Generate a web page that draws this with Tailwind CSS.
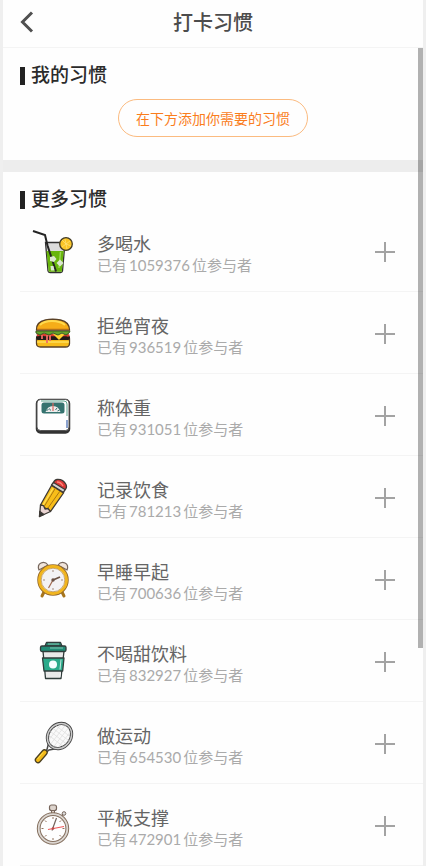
<!DOCTYPE html>
<html lang="zh-CN">
<head>
    <meta charset="UTF-8">
    <meta name="viewport" content="width=device-width, initial-scale=1.0">
    <title>打卡习惯</title>
    <script src="https://cdn.jsdelivr.net/npm/@tailwindcss/browser@4"></script>
</head>
<body class="bg-[#efefef] font-['Liberation_Sans','Noto_Sans_CJK_SC',sans-serif]">
    <div class="relative mx-[3px] h-screen overflow-hidden bg-[#fefefe]">
        <!-- Header -->
        <header class="grid h-12 grid-cols-[48px_1fr_48px] items-center border-b border-[#f4f4f4] pb-1">
            <button type="button" aria-label="返回" class="flex h-full items-center pl-4">
                <svg class="h-6 w-5" viewBox="0 0 20 24" fill="none" stroke="#505050" stroke-width="3"><path d="M13 2.500L3.500 12l9.500 9.500"/></svg>
            </button>
            <h1 class="pt-0.5 text-center text-xl leading-6 font-medium text-[#4c4c4c]">打卡习惯</h1>
        </header>

        <main>
            <!-- My habits -->
            <section class="h-28 px-[17px] pt-4">
                <h2 class="flex items-center gap-1.5 text-[19px] leading-6 font-medium text-[#2b2b2b]">
                    <span class="h-[18px] w-[5px] bg-[#222222]"></span>我的习惯
                </h2>
                <div class="mt-[11px] flex justify-center">
                    <button type="button" class="h-[38px] rounded-full border border-[#fbbb80] px-[17px] pt-0.5 text-sm text-[#fa7d1c]">在下方添加你需要的习惯</button>
                </div>
            </section>

            <div class="h-3 bg-[#ededed]"></div>

            <!-- More habits -->
            <section class="pt-4 pl-[17px]">
                <h2 class="flex items-center gap-1.5 text-[19px] leading-6 font-medium text-[#2b2b2b]">
                    <span class="h-[18px] w-[5px] bg-[#222222]"></span>更多习惯
                </h2>
                <ul class="-mt-0.5">
                    <li class="flex h-[82px] items-center border-b border-[#f4f4f4] pt-0.5 pr-7 pl-2">
                        <svg class="size-[50px]" viewBox="0 0 50 50" fill="none">
                            <path d="M17.500 15.500h19.500l-2.500 28.500q-.2 1.500-2 1.500H22q-1.800 0-2-1.500z" fill="#dcdcdc" stroke="#303030" stroke-width="1.300"/>
                            <path d="M18.500 24h17.200l-1.900 20.700H20.700z" fill="#68b50d"/>
                            <path d="M32.500 25l-1.500 16" stroke="#9bd751" stroke-width="1.500"/>
                            <circle cx="38" cy="17" r="6.300" fill="#fbc526" stroke="#423b25" stroke-width="1.300"/>
                            <path d="M38 17l-4-4m4 4l-1-5m1 5l4-3m-4 3l5 2m-5-2l1 5m-1-5l-4 3" stroke="#ffe47d" stroke-width=".7"/>
                            <path d="M5 4l12 4 2.500 10.500L28 44.500" stroke="#242424" stroke-width="2"/>
                            <path d="M22 30l4-1 2.500 3-2.500 3-4-1z M32 32.500l3.500 3.500-3.500 3.500-3.500-3.500z M22.500 39h3l1 4.500h-3.500z" fill="#dce8cf"/>
                        </svg>
                        <div class="ml-[19px] flex-1 pt-2">
                            <h3 class="text-[18px] leading-5 text-[#656565]">多喝水</h3>
                            <p class="text-[15px] leading-5 text-[#aaaaaa]">已有<span class="mx-0.5 font-['Lato',sans-serif]">1059376</span>位参与者</p>
                        </div>
                        <button type="button" aria-label="添加多喝水"><svg class="size-5" viewBox="0 0 20 20" stroke="#a3a3a3" stroke-width="2"><path d="M0 10h20M10 0v20"/></svg></button>
                    </li>
                    <li class="flex h-[82px] items-center border-b border-[#f4f4f4] pt-0.5 pr-7 pl-2">
                        <svg class="size-[50px]" viewBox="0 0 50 50" fill="none">
                            <path d="M8.500 30h33v4.500q0 3.500-4 3.500h-25q-4 0-4-3.500z" fill="#f7bb1a" stroke="#594026" stroke-width="1.300"/>
                            <path d="M9 33h32" stroke="#ffe363" stroke-width="1.300"/>
                            <rect x="8" y="26" width="34" height="5" rx="2.500" fill="#211b18"/>
                            <path d="M9 26.500q4-2 8-.5h21q2 0 3 1" stroke="#dc3c2e" stroke-width="2.500"/>
                            <path d="M14 26v4M19 26v8M22 26v6" stroke="#ef6c64" stroke-width="1.800"/>
                            <path d="M25 25h12l-6 6z" fill="#ffd22e"/>
                            <path d="M8 22h34l-1 2-3 2-4-2-4 2-5-2-4 2-5-2-4 2-4-2z" fill="#65a42b" stroke="#395c21"/>
                            <path d="M8.500 21q-.5-8 9-10 7-1.500 15 0 9 2 9 10z" fill="#f5ad18" stroke="#594026" stroke-width="1.300"/>
                            <path d="M12 16q4-4 12-4 8 0 13 4" stroke="#ffda4e" stroke-width="2"/>
                            <path d="M9 20h32" stroke="#dd8917"/>
                        </svg>
                        <div class="ml-[19px] flex-1 pt-2">
                            <h3 class="text-[18px] leading-5 text-[#656565]">拒绝宵夜</h3>
                            <p class="text-[15px] leading-5 text-[#aaaaaa]">已有<span class="mx-0.5 font-['Lato',sans-serif]">936519</span>位参与者</p>
                        </div>
                        <button type="button" aria-label="添加拒绝宵夜"><svg class="size-5" viewBox="0 0 20 20" stroke="#a3a3a3" stroke-width="2"><path d="M0 10h20M10 0v20"/></svg></button>
                    </li>
                    <li class="flex h-[82px] items-center border-b border-[#f4f4f4] pt-0.5 pr-7 pl-2">
                        <svg class="size-[50px]" viewBox="0 0 50 50" fill="none">
                            <rect x="8.500" y="8.500" width="33" height="33.500" rx="4" fill="#333" stroke="#333" stroke-width="1.500"/>
                            <rect x="9" y="8.500" width="32" height="31" rx="3.500" fill="#fefefe" stroke="#555" stroke-width="1"/>
                            <rect x="13.500" y="11.500" width="23" height="11" rx="2.500" fill="#35736f"/>
                            <path d="M17.500 21q2-6 7.500-6t7.500 6z" fill="#ececec"/>
                            <path d="M18.500 20l2-2M21.500 17.500l1 2M29 17l-1.500 2M31.500 19l-2 1" stroke="#35736f"/>
                            <path d="M25 12v8" stroke="#dc665e" stroke-width="1.200"/>
                            <path d="M13 10h23q3 0 3 3v12" stroke="#5ca58e"/>
                            <path d="M39 29v8" stroke="#4c70b4" stroke-width="1.300"/>
                        </svg>
                        <div class="ml-[19px] flex-1 pt-2">
                            <h3 class="text-[18px] leading-5 text-[#656565]">称体重</h3>
                            <p class="text-[15px] leading-5 text-[#aaaaaa]">已有<span class="mx-0.5 font-['Lato',sans-serif]">931051</span>位参与者</p>
                        </div>
                        <button type="button" aria-label="添加称体重"><svg class="size-5" viewBox="0 0 20 20" stroke="#a3a3a3" stroke-width="2"><path d="M0 10h20M10 0v20"/></svg></button>
                    </li>
                    <li class="flex h-[82px] items-center border-b border-[#f4f4f4] pt-0.5 pr-7 pl-2">
                        <svg class="size-[50px]" viewBox="0 0 50 50" fill="none" stroke="#3e3935" stroke-width="1.300" stroke-linejoin="round">
                            <path d="M25 11q1-4 4-4.500 6-.5 9 5 1.500 3-1.500 6z" fill="#dc3838"/>
                            <path d="M23.500 12l2-2.500 11.500 7-1.500 3z" fill="#d3d3d3"/>
                            <path d="M23.500 12.500L12.500 32l10 6.500L35.500 20z" fill="#f8bd19"/>
                            <path d="M12.500 32l-1 11.500 11-5-2.500-3-3 .5-1.500-3.500z" fill="#ead4d2"/>
                            <path d="M11.800 38.500l-.3 5 4.500-2z" fill="#343434"/>
                            <path d="M27.500 15L16.500 33M32 18L20 35" stroke="#aa7711" stroke-width="1"/>
                            <path d="M25 15.500L15 32" stroke="#ffe059" stroke-width="1.300"/>
                            <path d="M29 9q4 0 6 4" stroke="#ff8177"/>
                        </svg>
                        <div class="ml-[19px] flex-1 pt-2">
                            <h3 class="text-[18px] leading-5 text-[#656565]">记录饮食</h3>
                            <p class="text-[15px] leading-5 text-[#aaaaaa]">已有<span class="mx-0.5 font-['Lato',sans-serif]">781213</span>位参与者</p>
                        </div>
                        <button type="button" aria-label="添加记录饮食"><svg class="size-5" viewBox="0 0 20 20" stroke="#a3a3a3" stroke-width="2"><path d="M0 10h20M10 0v20"/></svg></button>
                    </li>
                    <li class="flex h-[82px] items-center border-b border-[#f4f4f4] pt-0.5 pr-7 pl-2">
                        <svg class="size-[50px]" viewBox="0 0 50 50" fill="none">
                            <path d="M16 37l-2 4M34 37l2 4" stroke="#a7751c" stroke-width="3" stroke-linecap="round"/>
                            <path d="M11 15q-2-5 2-7 4-2 7 2zM39 15q2-5-2-7-4-2-7 2z" fill="#f1e5dc" stroke="#77685e" stroke-width="1.200"/>
                            <circle cx="25" cy="25" r="15" fill="#f3f2f4" stroke="#95692a" stroke-width="1.500"/>
                            <circle cx="25" cy="25" r="13.500" stroke="#f1b51e" stroke-width="2.800"/>
                            <circle cx="25" cy="25" r="11.800" stroke="#b78a40" stroke-width=".7"/>
                            <path d="M25 15v2M25 33v2M15 25h2M33 25h2" stroke="#a38b7c"/>
                            <path d="M25 25l7-3" stroke="#6a5144" stroke-width="1.800"/>
                            <path d="M25 25l-4.500 8" stroke="#a16b52" stroke-width="1.200"/>
                            <circle cx="25" cy="25" r="1.700" fill="#6a5144"/>
                        </svg>
                        <div class="ml-[19px] flex-1 pt-2">
                            <h3 class="text-[18px] leading-5 text-[#656565]">早睡早起</h3>
                            <p class="text-[15px] leading-5 text-[#aaaaaa]">已有<span class="mx-0.5 font-['Lato',sans-serif]">700636</span>位参与者</p>
                        </div>
                        <button type="button" aria-label="添加早睡早起"><svg class="size-5" viewBox="0 0 20 20" stroke="#a3a3a3" stroke-width="2"><path d="M0 10h20M10 0v20"/></svg></button>
                    </li>
                    <li class="flex h-[82px] items-center border-b border-[#f4f4f4] pt-0.5 pr-7 pl-2">
                        <svg class="size-[50px]" viewBox="0 0 50 50" fill="none" stroke="#303c3b" stroke-width="1.300" stroke-linejoin="round">
                            <path d="M15 14h21l-3 27.500H17.500z" fill="#e9e9e9"/>
                            <path d="M14.500 21h21.500l-1.300 13H16z" fill="#2bab8b"/>
                            <path d="M17 9l1.500-3.500h14L34 9z" fill="#258871"/>
                            <rect x="12.500" y="9" width="25.500" height="5.500" rx="1.500" fill="#218b75"/>
                            <path d="M22 11h13M20 7h11" stroke="#82c5b1" stroke-width="1.200"/>
                            <circle cx="25" cy="27.500" r="4" fill="#f5ffff" stroke="none"/>
                            <path d="M33 22.500l-1 10M32.500 36l-.5 4" stroke="#fff" stroke-width=".7"/>
                        </svg>
                        <div class="ml-[19px] flex-1 pt-2">
                            <h3 class="text-[18px] leading-5 text-[#656565]">不喝甜饮料</h3>
                            <p class="text-[15px] leading-5 text-[#aaaaaa]">已有<span class="mx-0.5 font-['Lato',sans-serif]">832927</span>位参与者</p>
                        </div>
                        <button type="button" aria-label="添加不喝甜饮料"><svg class="size-5" viewBox="0 0 20 20" stroke="#a3a3a3" stroke-width="2"><path d="M0 10h20M10 0v20"/></svg></button>
                    </li>
                    <li class="flex h-[82px] items-center border-b border-[#f4f4f4] pt-0.5 pr-7 pl-2">
                        <svg class="size-[50px]" viewBox="0 0 50 50" fill="none">
                            <path d="M20.500 24.500l-1.500 6L16 34M29 29.500l-8 1.500-4 3.500" stroke="#494949" stroke-width="1.500"/>
                            <g transform="translate(31.500 17) rotate(38)">
                                <ellipse rx="11.300" ry="13.300" fill="#fafafa" stroke="#444" stroke-width="3.200"/>
                                <ellipse rx="11.300" ry="13.300" stroke="#ccc" stroke-width="1.500"/>
                                <path d="M-6-9V9M-2-12v24M2-12v24M6-9V9M-9-6H9M-10-2h20M-10 2h20M-9 6H9" stroke="#dedede" stroke-width=".7"/>
                            </g>
                            <path d="M16.500 33.500L10 41" stroke="#4b4022" stroke-width="6.500" stroke-linecap="round"/>
                            <path d="M16.500 33.500L10 41" stroke="#f3ba18" stroke-width="4" stroke-linecap="round"/>
                            <path d="M15 33.500l-5.500 6.500" stroke="#ffe152"/>
                        </svg>
                        <div class="ml-[19px] flex-1 pt-2">
                            <h3 class="text-[18px] leading-5 text-[#656565]">做运动</h3>
                            <p class="text-[15px] leading-5 text-[#aaaaaa]">已有<span class="mx-0.5 font-['Lato',sans-serif]">654530</span>位参与者</p>
                        </div>
                        <button type="button" aria-label="添加做运动"><svg class="size-5" viewBox="0 0 20 20" stroke="#a3a3a3" stroke-width="2"><path d="M0 10h20M10 0v20"/></svg></button>
                    </li>
                    <li class="flex h-[82px] items-center border-b border-[#f4f4f4] pt-0.5 pr-7 pl-2">
                        <svg class="size-[50px]" viewBox="0 0 50 50" fill="none">
                            <path d="M23.500 8h3v5h-3z" fill="#dacdc3" stroke="#77665c"/>
                            <rect x="21.500" y="4" width="7" height="5.500" rx="2" fill="#ddd4cd" stroke="#77665c" stroke-width="1.200"/>
                            <path d="M33.500 15l2.500-3" stroke="#77665c" stroke-width="1.500"/>
                            <circle cx="36" cy="12.500" r="1.800" fill="#ddd" stroke="#77665c"/>
                            <circle cx="25" cy="27.500" r="14.300" fill="#fefefe" stroke="#85705f" stroke-width="3.800"/>
                            <circle cx="25" cy="27.500" r="14.300" stroke="#dcd7d2" stroke-width="1.800"/>
                            <path d="M25 16v2M25 37v2M13.500 27.500h2M34.500 27.500h2M17 19.500l1.500 1.500M33 19.500L31.500 21M17 35.500l1.500-1.500M33 35.500L31.500 34" stroke="#92725d"/>
                            <path d="M24 29.500L28.500 17" stroke="#72635a" stroke-width="1.200"/>
                            <path d="M20 28.500l16-3" stroke="#ef5858" stroke-width="1.200"/>
                            <circle cx="25" cy="27.500" r="1.300" fill="#bd4949"/>
                        </svg>
                        <div class="ml-[19px] flex-1 pt-2">
                            <h3 class="text-[18px] leading-5 text-[#656565]">平板支撑</h3>
                            <p class="text-[15px] leading-5 text-[#aaaaaa]">已有<span class="mx-0.5 font-['Lato',sans-serif]">472901</span>位参与者</p>
                        </div>
                        <button type="button" aria-label="添加平板支撑"><svg class="size-5" viewBox="0 0 20 20" stroke="#a3a3a3" stroke-width="2"><path d="M0 10h20M10 0v20"/></svg></button>
                    </li>
                </ul>
            </section>
        </main>

        <!-- Scroll thumb -->
        <div class="absolute top-12 right-0 h-[600px] w-[5px] bg-black/30"></div>
    </div>
</body>
</html>
